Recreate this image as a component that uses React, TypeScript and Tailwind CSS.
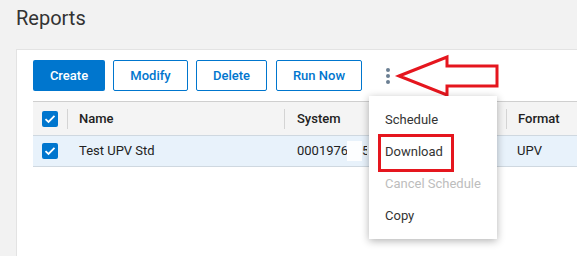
const font = { fontFamily: "Roboto, 'Liberation Sans', sans-serif" }

function Check() {
  return (
    <span className="flex h-4 w-4 items-center justify-center rounded-[2px] bg-[#0076ce]">
      <svg width="12" height="10" viewBox="0 0 12 10">
        <path d="M1.5 5.2 L4.5 8 L10.5 1.8" fill="none" stroke="#fff" strokeWidth="1.8" />
      </svg>
    </span>
  )
}

function OutlineButton({ label, w }: { label: string; w: string }) {
  return (
    <button
      className={`${w} h-[31px] rounded-[2px] border border-[#0076ce] bg-white text-[13px] font-medium text-[#0076ce]`}
    >
      {label}
    </button>
  )
}

export default function App() {
  return (
    <div className="relative flex h-[256px] w-[577px] flex-col overflow-hidden bg-[#f2f2f2]" style={font}>
      <h1 className="pl-[16px] pt-[5px] text-[20px] leading-[26px] text-[#333]">Reports</h1>

      <div className="ml-4 mt-[18px] flex-1 border-l border-t border-[#e3e3e3] bg-white">
        <div className="flex items-center gap-2 pl-[16px] pt-[10px]">
          <button className="h-[31px] w-[72px] rounded-[2px] bg-[#0076ce] text-[13px] font-medium text-white">
            Create
          </button>
          <OutlineButton label="Modify" w="w-[75px]" />
          <OutlineButton label="Delete" w="w-[71px]" />
          <span className="ml-[1px]">
            <OutlineButton label="Run Now" w="w-[86px]" />
          </span>
          <span className="ml-[16px] flex flex-col gap-[2px]">
            <span className="h-1 w-1 rounded-full bg-[#6b7f93]" />
            <span className="h-1 w-1 rounded-full bg-[#6b7f93]" />
            <span className="h-1 w-1 rounded-full bg-[#6b7f93]" />
          </span>
        </div>

        <div className="ml-[16px] mt-[10px] text-[13px] text-[#222]">
          <div className="flex h-[34px] items-center border-t border-[#cfcfcf] bg-[#f4f4f4]">
            <div className="flex w-[34px] justify-center">
              <Check />
            </div>
            <span className="h-5 w-px bg-[#d4d4d4]" />
            <div className="w-[216px] pl-[11px] font-medium">Name</div>
            <span className="h-5 w-px bg-[#d4d4d4]" />
            <div className="w-[221px] pl-[12px] font-medium">System</div>
            <span className="h-5 w-px bg-[#d4d4d4]" />
            <div className="pl-[11px] font-medium">Format</div>
          </div>
          <div className="flex h-[32px] items-center border-t border-b border-[#cfd8e0] bg-[#e8f2fb]">
            <div className="flex w-[34px] justify-center">
              <Check />
            </div>
            <div className="w-[217px] pl-[12px]">Test UPV Std</div>
            <div className="flex w-[222px] items-center pl-[13px]">
              <span className="w-[50px] overflow-hidden whitespace-nowrap">00019760</span>
              <span className="h-[20px] w-[15px] bg-white/90" />
              <span className="w-[5px] overflow-hidden">5</span>
            </div>
            <div className="pl-[11px]">UPV</div>
          </div>
        </div>
      </div>

      <svg className="absolute left-0 top-0" width="577" height="256">
        <polygon
          points="399,76 447,57 447,66 497,66 497,86 447,86 447,95"
          fill="none"
          stroke="#e5161e"
          strokeWidth="3"
          strokeLinejoin="miter"
        />
      </svg>

      <div className="absolute left-[369px] top-[96px] h-[143px] w-[128px] bg-white py-2 text-[13px] shadow-[0_2px_8px_rgba(0,0,0,0.3)]">
        <div className="flex h-8 items-center pl-4 text-[#333]">Schedule</div>
        <div className="flex h-8 items-center pl-4 text-[#333]">Download</div>
        <div className="flex h-8 items-center pl-4 text-[#bdbdbd]">Cancel Schedule</div>
        <div className="flex h-8 items-center pl-4 text-[#333]">Copy</div>
        <div className="absolute left-[9px] top-[38px] h-[38px] w-[76px] border-[3px] border-[#e5161e]" />
      </div>
    </div>
  )
}
